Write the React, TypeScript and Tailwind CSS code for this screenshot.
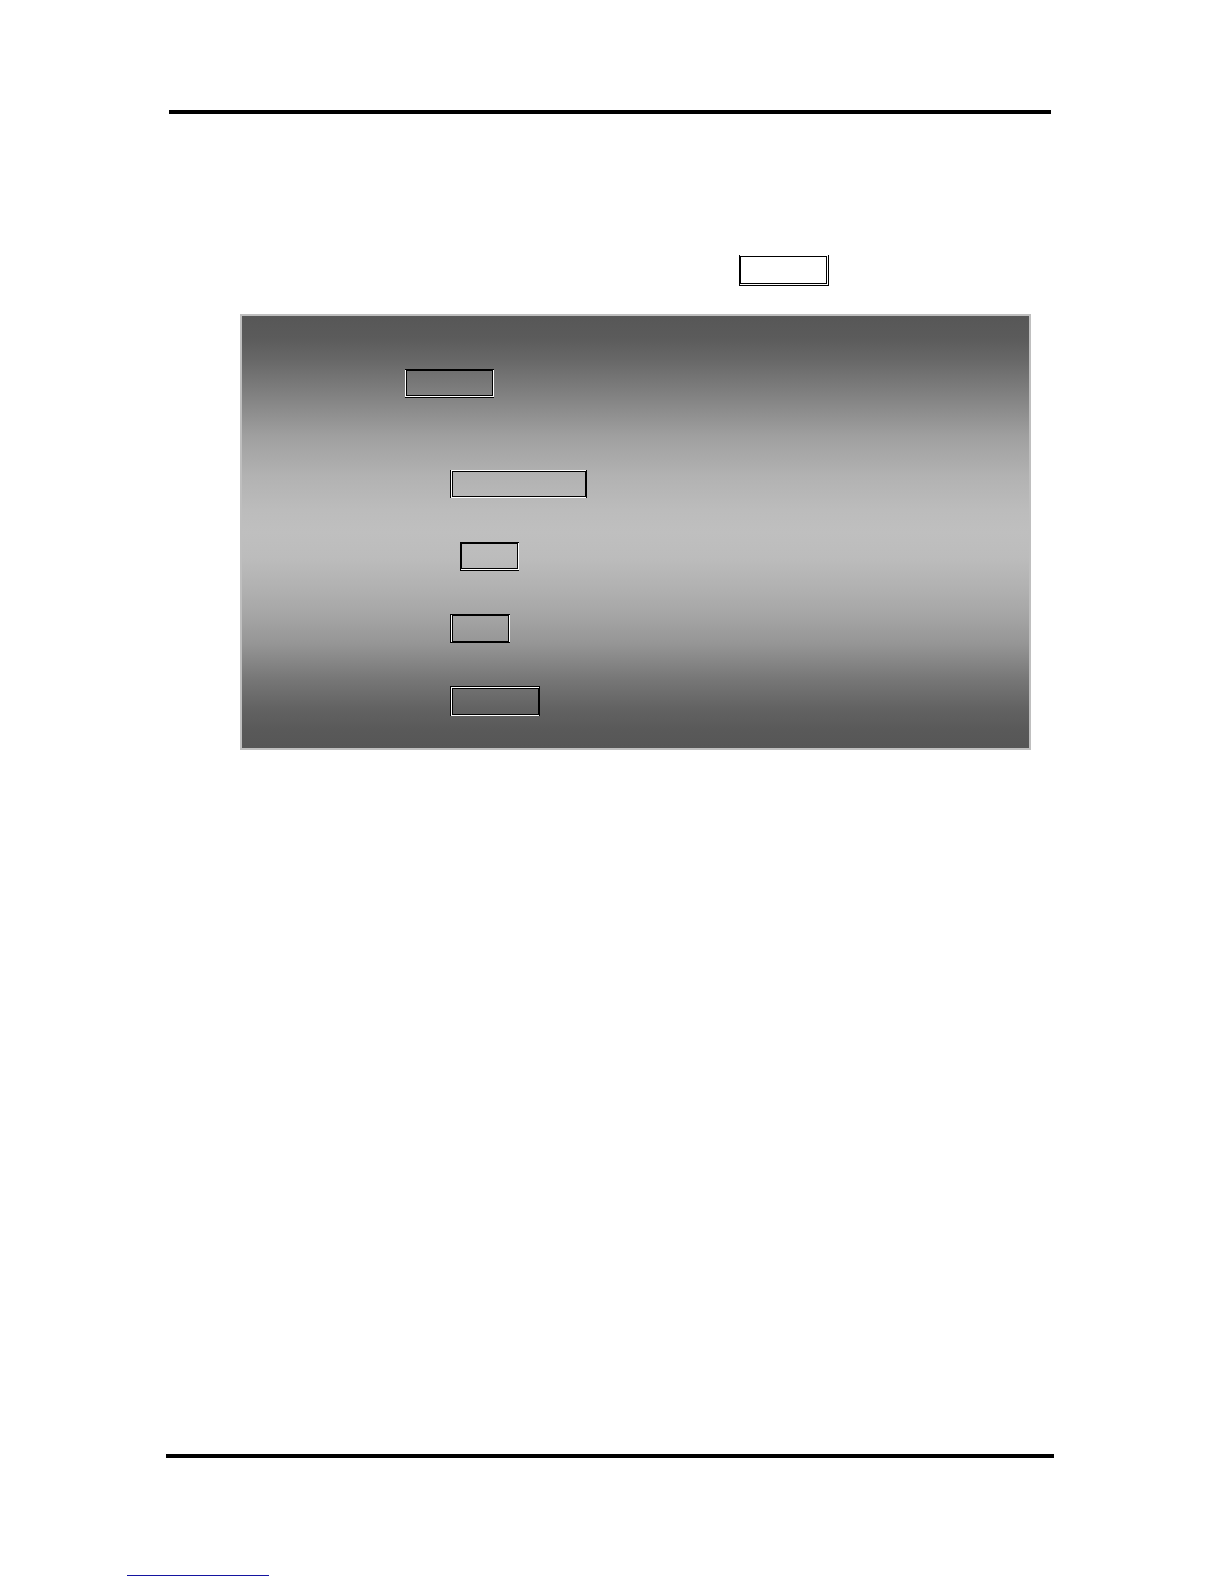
import clsx from 'clsx'

type KeyBoxProps = {
  className: string
  outer: string
  middle: string
}

// Outlined key box: outer line, light line, inner line
function KeyBox({ className, outer, middle }: KeyBoxProps) {
  return (
    <div className={clsx('flex shrink-0 border-black', className, outer)}>
      <div className={clsx('flex flex-1 border-white', middle)}>
        <div className="flex-1 border border-black" />
      </div>
    </div>
  )
}

const KEYS = [
  { row: 'h-[72px] pl-[208px]', size: 'h-7 w-[137px]', outer: 'border-x', middle: 'border-y border-l' },
  { row: 'h-[72px] pl-[218px]', size: 'h-[29px] w-[59px]', outer: 'border-y border-l', middle: 'border-r border-b' },
  { row: 'h-[72px] pl-[208px]', size: 'h-[29px] w-[60px]', outer: 'border-y border-l', middle: 'border-x' },
  { row: 'pl-[208px]', size: 'h-[30px] w-[90px]', outer: 'border-x border-t', middle: 'border-y border-l' },
]

function KeyPanel() {
  return (
    <section className="mt-7 mr-[193px] ml-[240px] border-2 border-[#bfbfbf] bg-[linear-gradient(#575757,#5b5b5b_5%,#676767_10%,#808080_18%,#a0a0a0_28%,#b2b2b2_37%,#bcbcbc_45%,#bfbfbf_50%,#bcbcbc_56%,#b1b1b1_63%,#a6a6a6_69%,#959595_76%,#777777_84%,#626262_91%,#595959_96%,#565656)] pt-[53px] pb-8">
      <div className="flex h-[101px] items-start pl-[163px]">
        <KeyBox className="h-[29px] w-[89px]" outer="border-y" middle="border-x border-b" />
      </div>
      {KEYS.map((k, i) => (
        <div key={i} className={clsx('flex items-start', k.row)}>
          <KeyBox className={k.size} outer={k.outer} middle={k.middle} />
        </div>
      ))}
    </section>
  )
}

export default function App() {
  return (
    <div className="flex min-h-screen flex-col bg-white font-['Liberation_Sans',sans-serif]">
      <header className="pt-[110px] pr-[173px] pl-[169px]">
        <hr className="h-1 border-0 bg-black" />
      </header>
      <main className="flex-1 pt-[141px]">
        <div className="flex pl-[739px]">
          <KeyBox className="h-[31px] w-[90px]" outer="border-x border-b" middle="border-t border-r border-b" />
        </div>
        <KeyPanel />
      </main>
      <footer className="pb-2">
        <hr className="mr-[170px] ml-[166px] h-1 border-0 bg-black" />
        <a href="#" aria-label="Home" className="mt-[98px] ml-[127px] block h-5 w-[142px] border-b border-[#1414a0]" />
      </footer>
    </div>
  )
}
